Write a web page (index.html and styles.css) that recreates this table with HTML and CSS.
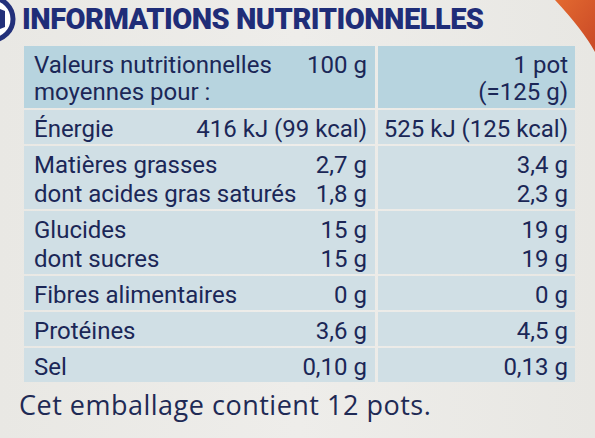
FILE: index.html
```html
<!DOCTYPE html>
<html lang="fr">
<head>
<meta charset="utf-8">
<title>Informations nutritionnelles</title>
<link rel="stylesheet" href="styles.css">
</head>
<body>
<div class="page">
  <svg class="badge" width="18" height="46" viewBox="0 0 18 46" aria-hidden="true">
    <circle cx="-8" cy="19" r="21" fill="#ffffff" stroke="#22307a" stroke-width="5"/>
    <path d="M0 9 L5 11 L5 27 L0 29 Z" fill="#22307a"/>
  </svg>
  <svg class="corner" width="42" height="58" viewBox="0 0 42 58" aria-hidden="true">
    <defs>
      <linearGradient id="og" x1="0" y1="0" x2="1" y2="1">
        <stop offset="0" stop-color="#e36a30"/>
        <stop offset="1" stop-color="#c94826"/>
      </linearGradient>
    </defs>
    <path d="M2 0 L42 0 L42 52 Q30 30 2 0 Z" fill="url(#og)"/>
  </svg>

  <h1 class="title">INFORMATIONS NUTRITIONNELLES</h1>

  <div class="table">
    <div class="cell left head">
      <div class="label">Valeurs nutritionnelles<br>moyennes pour :</div>
      <div class="value">100 g</div>
    </div>
    <div class="cell right head">1 pot<br>(=125 g)</div>

    <div class="cell left">
      <div class="label">Énergie</div>
      <div class="value">416 kJ (99 kcal)</div>
    </div>
    <div class="cell right">525 kJ (125 kcal)</div>

    <div class="cell left">
      <div class="label">Matières grasses<br>dont acides gras saturés</div>
      <div class="value">2,7 g<br>1,8 g</div>
    </div>
    <div class="cell right">3,4 g<br>2,3 g</div>

    <div class="cell left">
      <div class="label">Glucides<br>dont sucres</div>
      <div class="value">15 g<br>15 g</div>
    </div>
    <div class="cell right">19 g<br>19 g</div>

    <div class="cell left">
      <div class="label">Fibres alimentaires</div>
      <div class="value">0 g</div>
    </div>
    <div class="cell right">0 g</div>

    <div class="cell left">
      <div class="label">Protéines</div>
      <div class="value">3,6 g</div>
    </div>
    <div class="cell right">4,5 g</div>

    <div class="cell left">
      <div class="label">Sel</div>
      <div class="value">0,10 g</div>
    </div>
    <div class="cell right">0,13 g</div>
  </div>

  <p class="note">Cet emballage contient 12 pots.</p>
</div>
</body>
</html>
```
FILE: styles.css
```css
html, body {
  margin: 0;
  padding: 0;
  background: #ebeae6;
}

.page {
  position: relative;
  width: 595px;
  height: 438px;
  overflow: hidden;
  background: linear-gradient(90deg, #e9e8e4 0%, #eeedea 50%, #e8e7e3 100%);
}

.badge {
  position: absolute;
  left: 0;
  top: 0;
}

.corner {
  position: absolute;
  right: 0;
  top: 0;
}

.title {
  margin: 0;
  padding: 3px 0 0 22px;
  font-family: Roboto, "Liberation Sans", sans-serif;
  font-weight: 900;
  font-size: 29px;
  line-height: 32px;
  letter-spacing: -0.5px;
  color: #1f2d78;
  white-space: nowrap;
}

.table {
  margin: 11px 0 0 24px;
  width: 551px;
  display: grid;
  grid-template-columns: 351px 197px;
  column-gap: 3px;
  row-gap: 2px;
  font-family: Roboto, "Liberation Sans", sans-serif;
  font-size: 24px;
  line-height: 29px;
  color: #1b2757;
}

.cell {
  background: #d0dfe5;
  padding-top: 5px;
  white-space: nowrap;
}

.cell.head {
  background: #b7d4df;
  padding-top: 6px;
  padding-bottom: 2px;
  line-height: 27px;
}

.left {
  display: flex;
  justify-content: space-between;
  padding-left: 10px;
  padding-right: 8px;
}

.value {
  text-align: right;
}

.right {
  text-align: right;
  padding-right: 7px;
}

.note {
  margin: 7px 0 0 19px;
  font-family: "Open Sans", "Liberation Sans", sans-serif;
  font-size: 27px;
  line-height: 32px;
  letter-spacing: 0.5px;
  color: #1f2a55;
  white-space: nowrap;
}
```
